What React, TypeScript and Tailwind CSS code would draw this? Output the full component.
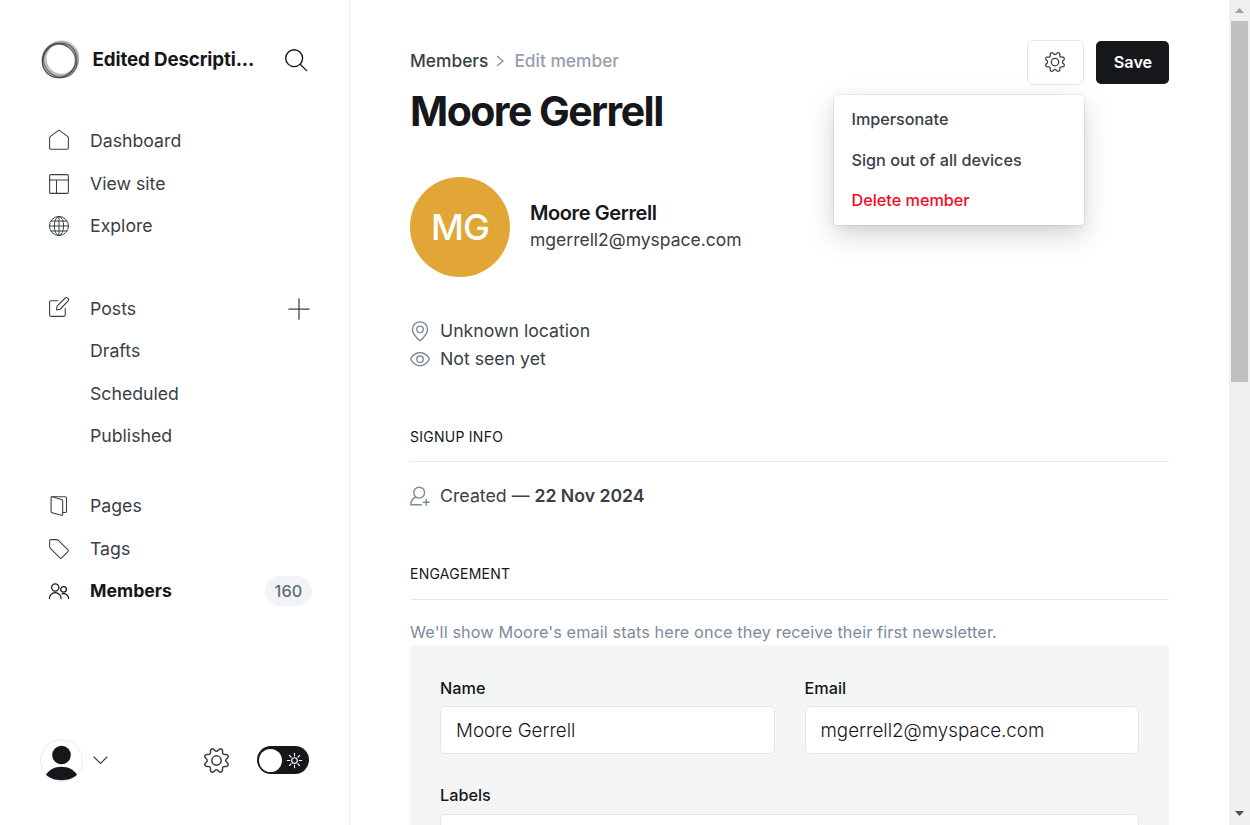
import type { ReactNode } from 'react';

function Icon({ size = 20, width = 1.3, className = '', children }: { size?: number; width?: number; className?: string; children: ReactNode }) {
  return (
    <svg width={size} height={size} viewBox="0 0 24 24" fill="none" stroke="currentColor" strokeWidth={width} strokeLinecap="round" strokeLinejoin="round" className={`shrink-0 overflow-visible ${className}`}>
      {children}
    </svg>
  );
}

const cog = 'M10.546 2.438a1.957 1.957 0 0 0 2.908 0L14.4 1.4a1.959 1.959 0 0 1 3.41 1.413l-.071 1.4a1.958 1.958 0 0 0 2.051 2.054l1.4-.071a1.959 1.959 0 0 1 1.41 3.41l-1.042.94a1.96 1.96 0 0 0 0 2.909l1.042.94a1.959 1.959 0 0 1-1.413 3.41l-1.4-.071a1.958 1.958 0 0 0-2.056 2.056l.071 1.4A1.959 1.959 0 0 1 14.4 22.6l-.941-1.041a1.959 1.959 0 0 0-2.908 0L9.606 22.6A1.959 1.959 0 0 1 6.2 21.192l.072-1.4a1.958 1.958 0 0 0-2.056-2.056l-1.4.071A1.958 1.958 0 0 1 1.4 14.4l1.041-.94a1.96 1.96 0 0 0 0-2.909L1.4 9.606A1.958 1.958 0 0 1 2.809 6.2l1.4.071a1.958 1.958 0 0 0 2.058-2.06L6.2 2.81A1.959 1.959 0 0 1 9.606 1.4z';

function Cog({ size, width }: { size: number; width: number }) {
  return (
    <Icon size={size} width={width}>
      <path d={cog} />
      <circle cx="12" cy="12" r="4.5" />
    </Icon>
  );
}

function NavItem({ icon, label, active = false, children }: { icon?: ReactNode; label: string; active?: boolean; children?: ReactNode }) {
  return (
    <a className={`flex h-[42.5px] items-center pl-[49px] pr-[37px] leading-[26.25px] ${active ? 'text-[17.7px] font-bold text-[#15171a]' : 'text-[17.7px] font-normal text-[#394047]'}`}>
      <span className="flex w-[41px] shrink-0 items-center">{icon}</span>
      <span className="flex-1">{label}</span>
      {children}
    </a>
  );
}

function Sidebar() {
  return (
    <nav className="flex h-full w-[350px] shrink-0 flex-col border-r border-[#e6e9eb]">
      <div className="mt-[38px] flex h-[45px] items-center pl-[40px] pr-[42px]">
        <svg width="40" height="40" viewBox="0 0 40 40" fill="none" className="-mt-[1px] shrink-0">
          <ellipse cx="20" cy="20" rx="17.2" ry="16.8" stroke="#777" strokeWidth="2.8" opacity=".5" />
          <ellipse cx="21.4" cy="18.6" rx="16.4" ry="16.6" stroke="#777" strokeWidth="3" opacity=".5" />
          <ellipse cx="18.8" cy="21" rx="16.5" ry="16.8" stroke="#333" strokeWidth="1.2" opacity=".6" />
          <ellipse cx="20.4" cy="20.4" rx="18" ry="15.8" stroke="#333" strokeWidth="1" opacity=".6" transform="rotate(48 20 20)" />
          <ellipse cx="19.3" cy="19.7" rx="17.9" ry="16" stroke="#333" strokeWidth="1" opacity=".6" transform="rotate(-50 20 20)" />
        </svg>
        <span className="ml-[12.5px] w-[180px] text-[18.75px] font-bold tracking-[-0.13px] text-[#15171a]">Edited Descripti...</span>
        <Icon size={22} width={1.5} className="-mt-[1px] ml-auto text-[#15171a]">
          <circle cx="10" cy="10" r="9.2" />
          <path d="M16.6 16.6 23.6 23.6" />
        </Icon>
      </div>

      <div className="mt-[37.1px]">
        <NavItem label="Dashboard" icon={<Icon className="-mt-[3px]"><path d="M.75 9.2v12.3c0 .9.6 1.5 1.5 1.5h19.5c.9 0 1.5-.6 1.5-1.5V9.2a1.5 1.5 0 0 0-.6-1.2L12.9.8a1.5 1.5 0 0 0-1.8 0L1.35 8a1.5 1.5 0 0 0-.6 1.2z" /></Icon>} />
        <NavItem label="View site" icon={<Icon><rect x=".75" y=".75" width="22.5" height="22.5" rx="1.5" /><path d="M.75 7.2h22.5M9 7.2v16" /></Icon>} />
        <NavItem label="Explore" icon={<Icon width={1.2} className="-mt-[1px]"><circle cx="12" cy="12" r="11.4" /><ellipse cx="12" cy="12" rx="5.6" ry="11.4" /><path d="M.6 12h22.8M2.4 6h19.2M2.4 18h19.2M12 .6v22.8" /></Icon>} />
      </div>

      <div className="mt-[40px]">
        <NavItem label="Posts" icon={<Icon className="-mt-[4px]"><path d="M19.5 13.5v8.2a1.5 1.5 0 0 1-1.5 1.5H2.2a1.5 1.5 0 0 1-1.5-1.5V6a1.5 1.5 0 0 1 1.5-1.5h8.3" /><path d="m13.4 14.7-4.5.9.8-4.6L19.5 1.2a1.9 1.9 0 0 1 2.8 0l.7.7a2 2 0 0 1 0 2.8z" /></Icon>}>
          <Icon size={20} width={1.5} className="mr-[3px]"><path d="M12 -.2v24.4M-.2 12h24.4" /></Icon>
        </NavItem>
        <NavItem label="Drafts" />
        <NavItem label="Scheduled" />
        <NavItem label="Published" />
      </div>

      <div className="mt-[27.5px]">
        <NavItem label="Pages" icon={<Icon className="-mt-[1px]"><path d="M3.5.8h15.8c1 0 1.7.7 1.7 1.7v15.8c0 1-.6 1.6-1.7 1.6h-2.8" /><path d="m4 .8 10.9 3.3c.9.3 1.5 1 1.5 1.9v16c0 .9-.6 1.4-1.5 1.2L3.7 20.1c-.8-.2-1.2-.8-1.2-1.6V2.1C2.5 1.2 3.2.6 4 .8z" /></Icon>} />
        <NavItem label="Tags" icon={<Icon><path d="M.75 9.1V2.25a1.5 1.5 0 0 1 1.5-1.5h6.9a3 3 0 0 1 2.1.9l11.5 11.5a1.5 1.5 0 0 1 0 2.1l-7.5 7.5a1.5 1.5 0 0 1-2.1 0L1.65 11.2a3 3 0 0 1-.9-2.1z" /></Icon>} />
        <NavItem
          label="Members"
          active
          icon={<Icon width={1.5} className="-mt-[1px]"><circle cx="7.5" cy="7.8" r="4.3" /><path d="M.5 21a7 7 0 0 1 14 0" /><circle cx="17.5" cy="10" r="3.4" /><path d="M15.6 15.4A6 6 0 0 1 23.5 21" /></Icon>}
        >
          <span className="-mt-[1px] flex h-[30px] w-[47px] items-center justify-center rounded-full bg-[#f1f3f4] text-[16.25px] font-medium tracking-[0.1px] text-[#626d79]">160</span>
        </NavItem>
      </div>

      <div className="mt-auto mb-[44px] flex h-[42px] items-center pl-[40px]">
        <svg width="43" height="43" viewBox="0 0 43 43" className="shrink-0">
          <circle cx="21.5" cy="21.5" r="20.9" fill="#fff" stroke="#e9ebed" />
          <circle cx="21.5" cy="16" r="9.3" fill="#15171a" />
          <path d="M6 35.5c3.5-5 9-7.7 15.5-7.7s12 2.7 15.5 7.7c-3.5 4-9 5.7-15.5 5.7s-12-1.7-15.5-5.7z" fill="#15171a" />
        </svg>
        <svg width="15" height="9" viewBox="0 0 15 9" fill="none" stroke="#394047" strokeWidth="1.1" strokeLinecap="round" className="ml-[10px]"><path d="m1 1 6.5 6.5L14 1" /></svg>
        <span className="ml-[96px] flex text-[#394047]"><Cog size={25} width={1.45} /></span>
        <span className="ml-[28px] flex h-[28px] w-[52px] items-center rounded-full bg-[#15171a] pl-[2px] text-white">
          <span className="h-[23px] w-[23px] rounded-full bg-white" />
          <Icon size={15} width={1.8} className="ml-[5px]"><circle cx="12" cy="12" r="4.5" /><path d="M12 .5v4M12 19.5v4M.5 12h4M19.5 12h4M4 4l2.5 2.5M17.5 17.5 20 20M4 20l2.5-2.5M17.5 6.5 20 4" /></Icon>
        </span>
      </div>
    </nav>
  );
}

function Field({ label, value, tall = false }: { label: string; value: string; tall?: boolean }) {
  return (
    <div className="flex-1">
      <div className="h-[27px] text-[16.25px] leading-[27px] font-medium text-[#15171a]">{label}</div>
      <div className={`flex h-[48px] items-center rounded-[5px] border border-[#e3e7e8] bg-white px-[15px] pt-[2px] text-[18.75px] font-light text-[#15171a] ${tall ? 'mt-[5px]' : 'mt-[4px]'}`}>{value}</div>
    </div>
  );
}

function Header() {
  return (
    <header className="relative flex h-[97px] items-start justify-between">
      <div>
        <div className="flex h-[24px] items-center text-[17.35px] font-medium">
          <span className="text-[#394047]">Members</span>
          <svg width="8" height="12" viewBox="0 0 8 12" fill="none" stroke="#7c8b9a" strokeWidth="1.2" className="mr-[10px] ml-[8px]"><path d="m1 1 6 5-6 5" /></svg>
          <span className="text-[#95a1ad]">Edit member</span>
        </div>
        <h1 className="mt-[12px] text-[41px] leading-[52px] font-bold tracking-[-1.55px] text-[#15171a]">Moore Gerrell</h1>
      </div>
      <div className="-mt-[9px] flex items-center gap-[12px]">
        <button className="flex h-[45px] w-[57px] items-center justify-center rounded-[6px] border border-[#e6e9eb] pr-[1px] pb-[1px] text-[#394047]"><Cog size={20} width={1.5} /></button>
        <button className="h-[43px] w-[73px] rounded-[5px] bg-[#15171a] pl-[1px] text-[16.25px] font-semibold text-white">Save</button>
      </div>
      <div className="absolute top-[46px] left-[424px] h-[130px] w-[250px] rounded-[4px] bg-white pt-[4px] text-[16.22px] font-medium text-[#394047] shadow-[0_0_0_1px_rgba(0,0,0,0.05),0_10px_28px_rgba(0,0,0,0.17),0_3px_8px_rgba(0,0,0,0.05)]">
        <div className="flex h-[40.5px] items-center px-[17.5px]">Impersonate</div>
        <div className="flex h-[40.5px] items-center px-[17.5px]">Sign out of all devices</div>
        <div className="flex h-[40.5px] items-center px-[17.5px] text-[#f50b23]">Delete member</div>
      </div>
    </header>
  );
}

export default function App() {
  return (
    <div className="flex h-[825px] w-[1250px] overflow-hidden bg-white font-['Inter',sans-serif]">
      <Sidebar />
      <main className="h-full w-[879px] shrink-0 overflow-hidden pt-[49px] pr-[60px] pl-[60px]">
        <Header />
        <section className="mt-[31px] flex h-[100px] items-center">
          <div className="flex h-[100px] w-[100px] items-center justify-center rounded-full bg-[#e1a636] text-[36px] font-medium tracking-[-0.9px] text-white">MG</div>
          <div className="ml-[20px]">
            <div className="h-[26px] text-[20px] leading-[27px] font-semibold tracking-[-0.4px] text-[#15171a]">Moore Gerrell</div>
            <div className="h-[28px] text-[17.5px] leading-[27px] text-[#394047]">mgerrell2@myspace.com</div>
          </div>
        </section>
        <section className="mt-[40px] text-[17.72px] leading-[27px] text-[#394047]">
          <div className="flex h-[28px] items-center gap-[10px]">
            <Icon width={1.7} className="text-[#7c8b9a]"><path d="M12 1C6.9 1 3 5 3 10c0 5.500 5.200 10.500 7.700 12.600.8.600 1.800.600 2.600 0C15.800 20.500 21 15.500 21 10c0-5-3.900-9-9-9z" /><circle cx="12" cy="10" r="3.9" /></Icon>
            <span className="-mt-[1.4px]">Unknown location</span>
          </div>
          <div className="flex h-[28px] items-center gap-[10px]">
            <Icon width={1.7} className="text-[#7c8b9a]"><path d="M12 4.500c-4.300 0-8.500 3-10.700 6.200-.6.800-.6 1.800 0 2.600C3.500 16.500 7.700 20 12 20s8.500-3.500 10.700-6.700c.6-.8.600-1.800 0-2.600C20.500 7.500 16.300 4.500 12 4.500z" /><circle cx="12" cy="12.200" r="3.9" /></Icon>
            <span className="-mt-[1.4px]">Not seen yet</span>
          </div>
        </section>
        <h2 className="mt-[52px] h-[37px] border-b border-[#e6e9eb] text-[14px] leading-[24px] font-normal tracking-[0.26px] text-[#15171a]">SIGNUP INFO</h2>
        <div className="mt-[20px] flex h-[28px] items-center gap-[10px] text-[17.75px] leading-[27px] text-[#394047]">
          <Icon width={1.7} className="text-[#7c8b9a]"><circle cx="11" cy="8" r="6.5" /><path d="M6.500 13.500C3.500 14.800 1.200 18 1 22.500h12.500M19.500 16v7M16 19.500h7" /></Icon>
          <span className="-mt-[1px]">Created — <b className="text-[17.65px] font-semibold">22 Nov 2024</b></span>
        </div>
        <h2 className="mt-[52px] h-[38px] border-b border-[#e6e9eb] text-[14px] leading-[24px] font-normal tracking-[0.26px] text-[#15171a]">ENGAGEMENT</h2>
        <p className="mt-[20px] h-[25px] text-[16.25px] leading-[25px] tracking-[0.11px] text-[#7c8b9a]">We'll show Moore's email stats here once they receive their first newsletter.</p>
        <section className="h-[300px] rounded-[4px] bg-[#f4f6f6] px-[30px] pt-[30px]">
          <div className="flex gap-[30px]">
            <Field label="Name" value="Moore Gerrell" />
            <Field label="Email" value="mgerrell2@myspace.com" />
          </div>
          <div className="mt-[28px] flex">
            <Field label="Labels" value="" tall />
          </div>
        </section>
      </main>
      <div className="flex h-full w-[21px] shrink-0 flex-col items-center bg-[#f0f0f0]">
        <div className="flex h-[21px] items-center"><svg width="9" height="5"><path d="M0 5h9L4.500 0z" fill="#a0a0a0" /></svg></div>
        <div className="h-[361px] w-[17px] bg-[#c1c1c1]" />
        <div className="mt-auto flex h-[23px] items-center"><svg width="9" height="5"><path d="M0 0h9L4.500 5z" fill="#505050" /></svg></div>
      </div>
    </div>
  );
}
